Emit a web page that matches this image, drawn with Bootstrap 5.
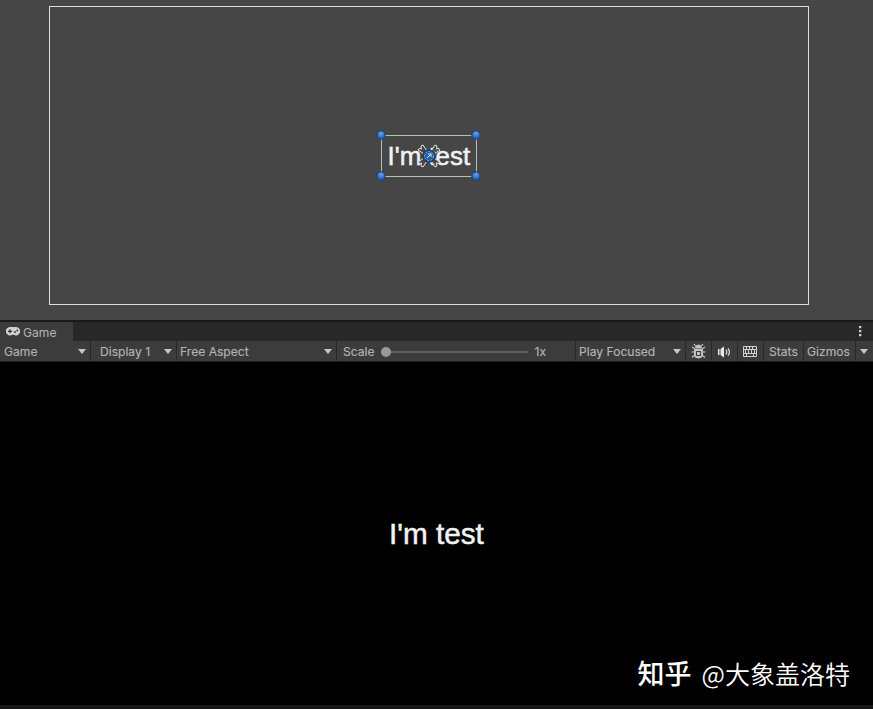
<!DOCTYPE html>
<html lang="zh">
<head>
<meta charset="utf-8">
<meta name="viewport" content="width=device-width, initial-scale=1">
<title>Game view</title>
<link href="https://cdn.jsdelivr.net/npm/bootstrap@5.3.0/dist/css/bootstrap.min.css" rel="stylesheet">
<style>
body{height:709px;background:#000;color:#b4b4b4;font:12.1px/20px Inter,"Liberation Sans",sans-serif;overflow:hidden}
svg{display:block;flex:none}
.scene{height:320px;background:#464646;padding:6px 64px 0 49px}
.canvas-frame{width:760px;height:299px;border:1px solid #dcdcdc}
.selection{width:96px;height:42px;margin:128px 0 0 331px;border:1px solid #b3c4b0}
.label-text{font-family:"Liberation Sans",Arial,sans-serif;color:#f2f2f2;white-space:pre;-webkit-text-stroke:.5px #f2f2f2}
.selection .label-text{font-size:25.9px;line-height:40px;padding-left:5.5px}
.gizmo{left:-7px;top:-7px}
.tabs{height:21px;background:#282828;border-top:2px solid #191919}
.tab-game{width:73px;padding-left:6px;background:#3c3c3c;gap:3px}
.tab-game span{line-height:19px;padding-top:1px}
.tools{height:21px;background:#3c3c3c;border-bottom:1px solid #1c1c1c}
.cell{display:flex;align-items:center;justify-content:space-between;height:20px;line-height:18px;padding-top:1px;border-right:1px solid #292929;white-space:nowrap;flex:none;-webkit-text-stroke:.15px #b4b4b4}
.w-mode{width:91px;padding:1px 4px 0}
.w-display{width:86px;padding:1px 4px 0 9px}
.w-aspect{width:160px;padding:1px 4px 0 3px}
.w-scale{width:239px;padding:1px 29px 0 6px}
.w-play{width:110px;padding:1px 4px 0 3px}
.w-stats{width:40px;padding-left:5px}
.w-gizmos{width:52px;padding-left:3px}
.w-more{width:17px;padding-left:4px}
.icon-cell{width:26px;justify-content:center;padding-right:1px}
.tri{width:0;height:0;border:4px solid transparent;border-top:5px solid #c8c8c8;border-bottom:0;flex:none}
.track{width:147px;height:2px;background:#606060}
.knob{width:10px;height:10px;background:#999;margin-top:-4px}
.game{height:343px}
.game .label-text{font-size:29.7px;line-height:34px;padding:155px 0 0 389px}
.credit{padding:100px 23px 0 0;color:#fff;font-family:"Noto Sans CJK SC",sans-serif;font-size:25px;line-height:42px;gap:10px}
.credit strong{font-weight:500;font-size:27px;line-height:44px}
.credit span{font-weight:350}
.footer-line{height:4px;background:#191919}
</style>
<script src="https://cdn.jsdelivr.net/npm/bootstrap@5.3.0/dist/js/bootstrap.bundle.min.js"></script>
</head>
<body class="m-0 d-flex flex-column">
<section class="scene">
  <div class="canvas-frame d-flex align-items-start">
    <div class="selection position-relative">
      <div class="label-text">I'm test</div>
      <svg class="gizmo position-absolute" width="108" height="54" viewBox="0 0 108 54">
        <defs><radialGradient id="blue" cy=".3"><stop stop-color="#68a2ea"/><stop offset="1" stop-color="#2b68bb"/></radialGradient></defs>
        <g fill="url(#blue)" stroke="#123d7c"><circle cx="6" cy="6" r="4.200"/><circle cx="101" cy="6" r="4.200"/><circle cx="6" cy="47" r="4.200"/><circle cx="101" cy="47" r="4.200"/></g>
        <g transform="translate(54 27)" fill="#464646" fill-opacity=".8" stroke="#e2e5e7" stroke-linejoin="round">
          <path d="M-5-2l-6-4 1-1.500 2.500.500-.500-3 2-1L-2-5zM5-2l6-4-1-1.500-2.500.500.500-3-2-1L2-5zM-5 2l-6 4 1 1.500 2.500-.500-.500 3 2 1L-2 5zM5 2l6 4-1 1.500-2.500-.500.500 3-2 1L2 5z"/>
          <circle r="5.800" fill="#285da0" fill-opacity="1" stroke="#173e70" stroke-width="1.500"/>
          <circle r="4.500" fill="none" stroke="#7fafe2" stroke-dasharray="2 1.300"/>
          <path d="M-2 2L2-2M-1-2h3v3" fill="none" stroke="#dce9f6"/>
        </g>
      </svg>
    </div>
  </div>
</section>

<div class="tabs d-flex justify-content-between">
  <div class="tab-game d-flex align-items-center">
    <svg width="14" height="9" viewBox="0 0 14 9"><path d="M4 0h6a4.200 4.200 0 1 1-2.300 7.700H6.300A4.200 4.200 0 1 1 4 0z" fill="#d0d0d0"/><path d="M2 4.300h4M4 2.300v4" stroke="#333" stroke-width="1.200"/><circle cx="9" cy="5" r=".9" fill="#333"/><circle cx="11.300" cy="3.500" r=".9" fill="#333"/></svg>
    <span>Game</span>
  </div>
  <svg class="mt-1 me-2" width="9" height="12" viewBox="0 0 9 12" fill="#d0d0d0"><path d="M3 0h2.300v2.300H3zM3 4h2.300v2.300H3zM3 8h2.300v2.300H3z"/></svg>
</div>

<div class="tools d-flex">
  <div class="cell w-mode">Game<i class="tri"></i></div>
  <div class="cell w-display">Display 1<i class="tri"></i></div>
  <div class="cell w-aspect">Free Aspect<i class="tri"></i></div>
  <div class="cell w-scale">Scale<div class="track"><div class="knob rounded-circle position-relative"></div></div>1x</div>
  <div class="cell w-play">Play Focused<i class="tri"></i></div>
  <div class="cell icon-cell">
    <svg width="15" height="15" viewBox="0 0 15 15" fill="none" stroke="#c4c4c4"><path d="M4.500 2L3 0M10.500 2L12 0M4 5L1 3M11 5l3-2M4 8H.500M11 8h3.500M4 11l-3 2.500M11 11l3 2.500" stroke-width="1.200"/><path d="M4.500 4a3 3 0 0 1 6 0z" fill="#c4c4c4"/><path d="M3.500 5.500h8V11q0 3-4 3t-4-3z" fill="#c4c4c4"/><path d="M5.500 7.500h4v4h-4z" stroke="#3c3c3c" stroke-width="1.100"/></svg>
  </div>
  <div class="cell icon-cell">
    <svg width="14" height="12" viewBox="0 0 14 12"><path d="M1 3h1.500v6H1zM3.500 3L7 .5v11L3.500 9z" fill="#e8e8e8"/><path d="M8.800 3.500q2 2.500 0 5M11 2.300q2.800 3.700 0 7.400" fill="none" stroke="#e0e0e0" stroke-width="1.200"/></svg>
  </div>
  <div class="cell icon-cell">
    <svg width="14" height="11" viewBox="0 0 14 11" fill="none" stroke="#d0d0d0"><path d="M.500.500h13v10H.500zM0 3.500h14M0 7.500h14M3.500 0v3M6.500 0v3M9.500 0v3M5.500 4v3M8.500 4v3M11.500 4v3M2.500 4v3M3.500 8v3M10.500 8v3"/></svg>
  </div>
  <div class="cell w-stats">Stats</div>
  <div class="cell w-gizmos">Gizmos</div>
  <div class="cell w-more border-0"><i class="tri"></i></div>
</div>

<main class="game">
  <div class="label-text">I'm test</div>
  <div class="credit d-flex justify-content-end align-items-center"><strong>知乎</strong><span>@大象盖洛特</span></div>
</main>
<div class="footer-line"></div>
</body>
</html>
